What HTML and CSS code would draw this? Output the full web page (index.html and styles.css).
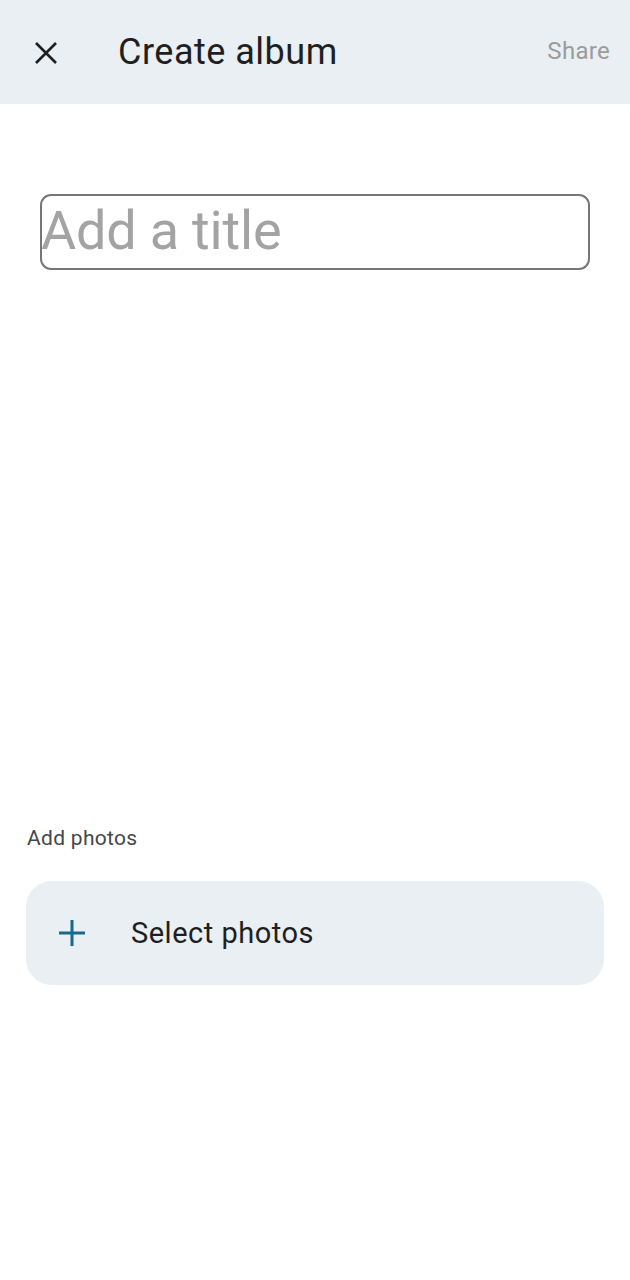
FILE: index.html
```html
<!DOCTYPE html>
<html>
<head>
<meta charset="utf-8">
<link rel="stylesheet" href="styles.css">
</head>
<body>
<header class="appbar">
  <button class="close" aria-label="Close">
    <svg width="24" height="24" viewBox="0 0 24 24"><path d="M2 2 L22 22 M22 2 L2 22" stroke="#1f1f1f" stroke-width="2.6" fill="none"/></svg>
  </button>
  <h1 class="title">Create album</h1>
  <span class="share">Share</span>
</header>
<main class="content">
  <div class="title-field"><span class="placeholder">Add a title</span></div>
  <section class="photos">
    <h2 class="section-label">Add photos</h2>
    <button class="select">
      <svg class="plus" width="28" height="28" viewBox="0 0 28 28"><path d="M14 1 V27 M1 14 H27" stroke="#186a8c" stroke-width="3" fill="none"/></svg>
      <span class="select-text">Select photos</span>
    </button>
  </section>
</main>
</body>
</html>
```
FILE: styles.css
```css
* { box-sizing: border-box; }
html, body { margin: 0; padding: 0; background: #fff; }
body { font-family: Roboto, "Open Sans", sans-serif; width: 630px; height: 1280px; }
.appbar {
  height: 104px;
  background: #e9eff3;
  display: flex;
  align-items: center;
  padding: 0 20px 0 34px;
}
.close {
  border: 0; background: none; padding: 0; margin: 0 0 0 0;
  width: 24px; height: 24px; display: flex; margin-top: 2px;
}
.title {
  margin: 0 0 0 60px;
  font-size: 36px;
  font-weight: 400;
  color: #1f1f1f;
  letter-spacing: 0.5px;
  flex: 1;
}
.share { font-size: 24px; color: #9a9c9d; margin-top: -2px; letter-spacing: 0.3px; }
.content { padding: 90px 0 0 0; }
.title-field {
  margin: 0 40px 0 40px;
  height: 76px;
  border: 2px solid #747775;
  border-radius: 11px;
  display: flex;
  align-items: center;
  padding-left: 0;
}
.placeholder {
  font-size: 54px;
  color: #a3a3a3;
  letter-spacing: -0.2px;
  margin-top: -3px;
  margin-left: -1px;
}
.photos { padding: 556px 26px 0 26px; }
.section-label {
  margin: 0;
  font-size: 21px;
  font-weight: 400;
  color: #444746;
  line-height: 24px;
  padding-left: 1px;
  letter-spacing: 0.3px;
}
.select {
  margin-top: 31px;
  width: 578px;
  height: 104px;
  border: 0;
  border-radius: 26px;
  background: #e9eff3;
  display: flex;
  align-items: center;
  padding: 0 0 0 32px;
  font-family: inherit;
}
.select-text {
  margin-left: 45px;
  font-size: 29px;
  color: #1f1f1f;
  letter-spacing: 0.5px;
}
```
